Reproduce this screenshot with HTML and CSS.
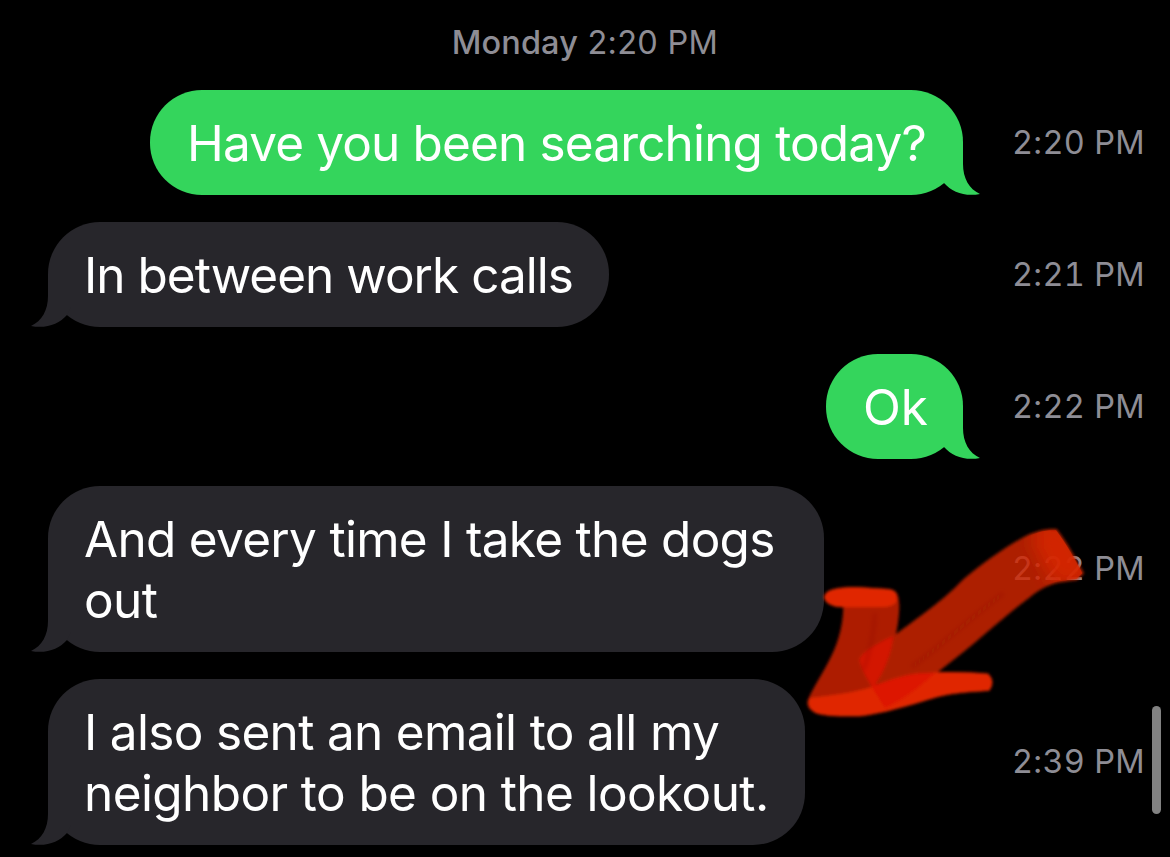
FILE: index.html
```html
<!DOCTYPE html>
<html lang="en">
<head>
    <meta charset="UTF-8">
    <meta name="viewport" content="width=device-width, initial-scale=1.0">
    <title>Messages</title>
    <link rel="stylesheet" href="styles.css">
</head>
<body>
    <svg width="0" height="0" class="defs">
        <symbol id="tail" viewBox="0 0 40 60">
            <path d="M0 8H23V29C23 43 29 54 40 59C25 62 12 57 4 48L0 40Z"/>
        </symbol>
    </svg>
    <div class="chat">
        <header class="date"><b>Monday</b> 2:20 PM</header>
        <div class="row sent">
            <div class="bubble bubble-1"><span class="t1">Have you been searching today?</span><svg class="tail"><use href="#tail"/></svg></div>
            <time>2:20 PM</time>
        </div>
        <div class="row received">
            <div class="bubble bubble-2"><span class="t2">In between work calls</span><svg class="tail"><use href="#tail"/></svg></div>
            <time>2:21 PM</time>
        </div>
        <div class="row sent">
            <div class="bubble bubble-3"><span class="t3">Ok</span><svg class="tail"><use href="#tail"/></svg></div>
            <time>2:22 PM</time>
        </div>
        <div class="row received">
            <div class="bubble bubble-4"><span class="t4">And every time I take the dogs</span><br><span class="t5">out</span><svg class="tail"><use href="#tail"/></svg></div>
            <time>2:22 PM</time>
        </div>
        <div class="row received">
            <div class="bubble bubble-5"><span class="t6">I also sent an email to all my</span><br><span class="t7">neighbor to be on the lookout.</span><svg class="tail"><use href="#tail"/></svg></div>
            <time>2:39 PM</time>
        </div>
        <div class="scrollbar"></div>

        <!-- hand drawn marker arrow -->
        <svg class="arrow" viewBox="0 0 930 660">
            <defs>
                <filter id="soft"><feGaussianBlur stdDeviation="4"/></filter>
                <filter id="softer" x="-100%" y="-100%" width="300%" height="300%"><feGaussianBlur stdDeviation="26"/></filter>
                <filter id="streaks" x="-100%" y="-50%" width="300%" height="200%"><feGaussianBlur stdDeviation="7"/></filter>
                <clipPath id="shaft">
                    <path d="M798 61C770 59 735 66 702 86C640 119 570 169 520 212C450 284 400 314 322 374C285 390 220 425 208 450C215 490 250 540 285 594C350 560 400 520 445 485C560 396 640 316 720 258C775 211 810 214 860 206L877 190C856 150 828 99 798 61Z"/>
                </clipPath>
            </defs>
            <g filter="url(#soft)">
                <path class="ink" d="M800 57C770 55 735 62 700 82C640 115 570 165 520 208C450 280 400 310 322 370C285 390 250 405 240 430L215 580L285 594C350 560 400 520 445 485C560 400 640 320 720 262C775 215 810 218 862 210L882 190C860 150 830 95 800 57Z"/>
                <path class="ink-base" d="M102 262C106 236 150 231 200 231L295 237C322 241 325 252 328 285C328 330 318 385 303 420C290 460 280 490 258 524C300 512 350 490 400 490C470 483 540 487 595 491Q618 515 598 542C540 545 480 550 440 562C350 590 280 610 210 619C150 619 100 619 75 608Q50 595 52 575C65 540 95 495 113 460C140 410 158 360 160 292C130 292 106 282 102 262Z"/>
                <path class="ink-strong" d="M102 262C106 236 150 231 200 231L295 237C322 241 322 255 320 275Q305 292 275 291L160 292C130 292 106 282 102 262Z"/>
                <path class="ink-strong" d="M58 565C110 557 200 550 258 526C300 510 350 490 400 490C470 483 540 487 595 491Q618 515 598 542C540 545 480 550 440 562C350 590 280 610 210 619C150 619 100 619 75 608Q50 595 58 565Z"/>
                <path class="overlap" d="M310 378C270 395 215 425 208 450C215 480 232 505 245 530L285 594C340 570 390 530 435 490C370 483 310 505 255 525C282 485 305 435 310 378Z"/>
            </g>
            <g clip-path="url(#shaft)">
                <path class="glow" filter="url(#softer)" d="M735 30L830 40L910 195L865 230L790 220L730 110Z"/>
            </g>
            <path class="streak" filter="url(#streaks)" d="M365 470C440 420 520 340 640 250"/>
            <path class="streak" filter="url(#streaks)" d="M255 310Q250 400 220 480"/>
        </svg>
    </div>
</body>
</html>
```
FILE: styles.css
```css
* {
    box-sizing: border-box;
}

body {
    margin: 0;
    background-color: #000;
    font-family: Inter, "Liberation Sans", sans-serif;
    overflow: hidden;
}

.defs {
    position: absolute;
}

.chat {
    position: relative;
    height: 857px;
    display: flex;
    flex-direction: column;
    gap: 27px;
}

.date {
    height: 63px;
    padding-top: 22px;
    text-align: center;
    font-size: 32.5px;
    line-height: 42px;
    letter-spacing: 0.3px;
    color: #8e8d95;
}

.date b {
    font-weight: 500;
    letter-spacing: 0.1px;
}

.row {
    display: flex;
    align-items: center;
    justify-content: space-between;
    padding: 0 26px 0 48px;
}

.sent {
    justify-content: flex-end;
    gap: 49px;
}

.bubble {
    position: relative;
    padding: 23px 0 21px 36px;
    border-radius: 52px;
    font-size: 49.5px;
    line-height: 61px;
    color: #fff;
    white-space: nowrap;
}

.sent .bubble {
    padding-left: 37px;
    background-color: #34d55c;
    fill: #34d55c;
}

.received .bubble {
    background-color: #27262b;
    fill: #27262b;
}

.bubble-1 { width: 813px; }
.bubble-2 { width: 561px; }
.bubble-3 { width: 137px; }
.bubble-4 { width: 776px; }
.bubble-5 { width: 757px; }

.t1 { letter-spacing: -0.85px; }
.t2 { letter-spacing: -0.98px; }
.t3 { letter-spacing: 0; }
.t4 { letter-spacing: -0.7px; }
.t5 { letter-spacing: -0.6px; }
.t6 { letter-spacing: -0.68px; }
.t7 { letter-spacing: -0.6px; }

.tail {
    position: absolute;
    right: -17px;
    bottom: 0;
    width: 40px;
    height: 60px;
}

.received .tail {
    right: auto;
    left: -17px;
    transform: scaleX(-1);
}

time {
    width: 132px;
    font-size: 32.5px;
    line-height: 40px;
    letter-spacing: 0.3px;
    font-variant-numeric: tabular-nums;
    color: #8e8d95;
    white-space: nowrap;
}

.scrollbar {
    position: absolute;
    right: 9px;
    top: 706px;
    width: 9px;
    height: 108px;
    border-radius: 5px;
    background-color: #828282;
}

.arrow {
    position: absolute;
    left: 790px;
    top: 510px;
    width: 310px;
    height: 220px;
}

.ink {
    fill: rgba(211, 36, 0, 0.82);
}

.ink-base {
    fill: #ad1d00;
}

.ink-strong {
    fill: #e02600;
}

.overlap {
    fill: #dc1004;
    fill-opacity: 0.8;
}

.glow {
    fill: #d82400;
    fill-opacity: 0.85;
}

.streak {
    fill: none;
    stroke: #8c1600;
    stroke-opacity: 0.25;
    stroke-width: 12;
}
```
